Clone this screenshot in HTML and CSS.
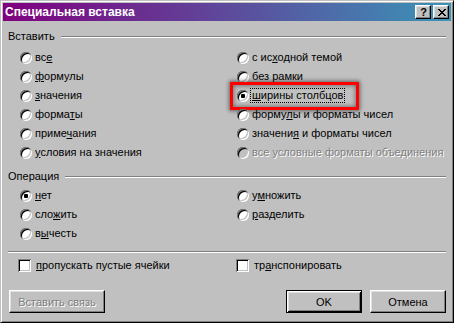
FILE: index.html
```html
<!DOCTYPE html>
<html lang="ru">
<head>
<meta charset="utf-8">
<title>Специальная вставка</title>
<link rel="stylesheet" href="styles.css">
</head>
<body>
<div class="window">
  <div class="titlebar">
    <span class="title">Специальная вставка</span>
    <div class="tbtns">
      <span class="tbtn help">?</span>
      <span class="tbtn close">
        <svg width="8" height="7" viewBox="0 0 8 7"><path d="M0 0h2v1H0zM6 0h2v1H6zM1 1h2v1H1zM5 1h2v1H5zM2 2h4v1H2zM3 3h2v1H3zM2 4h4v1H2zM1 5h2v1H1zM5 5h2v1H5zM0 6h2v1H0zM6 6h2v1H6z" fill="#000"/></svg>
      </span>
    </div>
  </div>
  <div class="body">
    <div class="group-head"><span>Вставить</span><i class="rule"></i></div>
    <div class="opts paste">
      <div class="opt"><span class="radio"></span><span class="lbl">вс<u>е</u></span></div>
      <div class="opt"><span class="radio"></span><span class="lbl"><u>ф</u>ормулы</span></div>
      <div class="opt"><span class="radio"></span><span class="lbl"><u>з</u>начения</span></div>
      <div class="opt"><span class="radio"></span><span class="lbl">форма<u>т</u>ы</span></div>
      <div class="opt"><span class="radio"></span><span class="lbl">приме<u>ч</u>ания</span></div>
      <div class="opt"><span class="radio"></span><span class="lbl"><u>у</u>словия на значения</span></div>
      <div class="opt"><span class="radio"></span><span class="lbl">с ис<u>х</u>одной темой</span></div>
      <div class="opt"><span class="radio"></span><span class="lbl">без рамки</span></div>
      <div class="opt marked"><span class="radio"><i class="dot"></i></span><span class="lbl focus"><u>ш</u>ирины столбцов</span><span class="hl"></span></div>
      <div class="opt"><span class="radio"></span><span class="lbl">форму<u>л</u>ы и форматы чисел</span></div>
      <div class="opt"><span class="radio"></span><span class="lbl">значени<u>я</u> и форматы чисел</span></div>
      <div class="opt disabled"><span class="radio"></span><span class="lbl">все условные форматы объединения</span></div>
    </div>
    <div class="group-head op-head"><span>Операция</span><i class="rule"></i></div>
    <div class="opts ops">
      <div class="opt"><span class="radio"><i class="dot"></i></span><span class="lbl"><u>н</u>ет</span></div>
      <div class="opt"><span class="radio"></span><span class="lbl">сло<u>ж</u>ить</span></div>
      <div class="opt"><span class="radio"></span><span class="lbl">в<u>ы</u>честь</span></div>
      <div class="opt"><span class="radio"></span><span class="lbl">у<u>м</u>ножить</span></div>
      <div class="opt"><span class="radio"></span><span class="lbl"><u>р</u>азделить</span></div>
    </div>
    <div class="sep"></div>
    <div class="checks">
      <div class="opt"><span class="check"></span><span class="lbl"><u>п</u>ропускать пустые ячейки</span></div>
      <div class="opt"><span class="check"></span><span class="lbl">тр<u>а</u>нспонировать</span></div>
    </div>
    <div class="buttons">
      <span class="btn disabled link">Вставить связь</span>
      <span class="spacer"></span>
      <span class="btn default">OK</span>
      <span class="btn">Отмена</span>
    </div>
  </div>
</div>
</body>
</html>
```

FILE: styles.css
```css
* { box-sizing: border-box; }
html, body { margin: 0; padding: 0; background: #c0c0c0; }
body {
  font-family: "Liberation Sans", Arial, sans-serif;
  font-size: 11px;
  color: #000;
}
.window {
  width: 454px;
  height: 323px;
  background: #c0c0c0;
  border: 1px solid;
  border-color: #c0c0c0 #000 #000 #c0c0c0;
  box-shadow: inset 1px 1px #fff, inset -1px -1px #808080;
  padding: 2px;
  overflow: hidden;
}
.titlebar {
  height: 18px;
  display: flex;
  align-items: center;
  padding: 0 2px 0 2px;
  background: linear-gradient(90deg, #80007f 0%, #3a94b8 100%);
  color: #fff;
}
.title {
  flex: 1;
  font-weight: bold;
  font-size: 12px;
  line-height: 18px;
  white-space: nowrap;
}
.tbtns { display: flex; gap: 2px; }
.tbtn {
  width: 16px;
  height: 14px;
  display: flex;
  align-items: center;
  justify-content: center;
  background: #c0c0c0;
  border: 1px solid;
  border-color: #fff #000 #000 #fff;
  box-shadow: inset -1px -1px #808080, inset 1px 1px #dfdfdf;
  color: #000;
}
.help {
  font-weight: bold;
  font-size: 11px;
  line-height: 12px;
  padding-left: 1px;
}
.close svg { display: block; margin-left: 1px; }
.body {
  padding: 9px 5px 0 5px;
}
.group-head {
  display: flex;
  align-items: center;
  height: 13px;
  line-height: 13px;
}
.group-head span { white-space: nowrap; }
.rule {
  flex: 1;
  margin-left: 6px;
  height: 0;
  border-top: 1px solid #808080;
  border-bottom: 1px solid #fff;
}
.opts {
  display: grid;
  grid-auto-flow: column;
  grid-template-columns: 217px 1fr;
  padding-left: 12px;
}
.paste { margin-top: 5px; grid-template-rows: repeat(6, 19px); }
.op-head { margin-top: 8px; }
.ops { margin-top: 3px; grid-template-rows: repeat(3, 19px); }
.opt {
  display: flex;
  align-items: center;
  height: 19px;
  position: relative;
  white-space: nowrap;
}
.radio {
  flex: none;
  width: 12px;
  height: 12px;
  border-radius: 50%;
  background: #fff;
  box-shadow: inset 1px 1px #808080, inset -1px -1px #fff, inset 2px 2px #000, inset -2px -2px #c0c0c0;
  display: flex;
  align-items: center;
  justify-content: center;
}
.dot {
  width: 4px;
  height: 4px;
  border-radius: 1px;
  background: #000;
}
.lbl {
  margin-left: 1px;
  padding: 0 1px;
  border: 1px solid transparent;
  line-height: 13px;
}
.lbl u { text-decoration: underline; text-underline-offset: 1px; }
.focus { border: 1px dotted #000; }
.disabled .radio { background: #c0c0c0; }
.disabled .lbl { color: #808080; text-shadow: 1px 1px #fff; }
.hl {
  position: absolute;
  left: -7px;
  top: -4px;
  width: 129px;
  height: 28px;
  border: 3px solid #ff0000;
  box-shadow: 0 0 4px 1px rgba(0, 0, 0, 0.5), inset 0 0 4px 1px rgba(0, 0, 0, 0.4);
  pointer-events: none;
}
.sep {
  margin-top: 8px;
  border-top: 1px solid #808080;
  border-bottom: 1px solid #fff;
}
.checks {
  margin-top: 3px;
  display: grid;
  grid-template-columns: 218px 1fr;
  padding-left: 10px;
}
.check {
  flex: none;
  width: 13px;
  height: 13px;
  background: #fff;
  box-shadow: inset 1px 1px #808080, inset -1px -1px #fff, inset 2px 2px #000, inset -2px -2px #c0c0c0;
}
.checks .lbl { margin-left: 3px; }
.buttons {
  margin-top: 15px;
  display: flex;
  height: 23px;
}
.spacer { flex: 1; }
.btn {
  height: 23px;
  width: 76px;
  text-align: center;
  padding-top: 2px;
  line-height: 19px;
  background: #c0c0c0;
  border: 1px solid;
  border-color: #fff #000 #000 #fff;
  box-shadow: inset -1px -1px #808080, inset 1px 1px #dfdfdf;
  white-space: nowrap;
}
.btn.link { width: 96px; margin-left: 1px; }
.btn.default {
  margin-right: 8px;
  border-color: #000;
  box-shadow: inset 1px 1px #fff, inset -1px -1px #000, inset 2px 2px #dfdfdf, inset -2px -2px #808080;
}
.btn.disabled { color: #808080; text-shadow: 1px 1px #fff; }
```
